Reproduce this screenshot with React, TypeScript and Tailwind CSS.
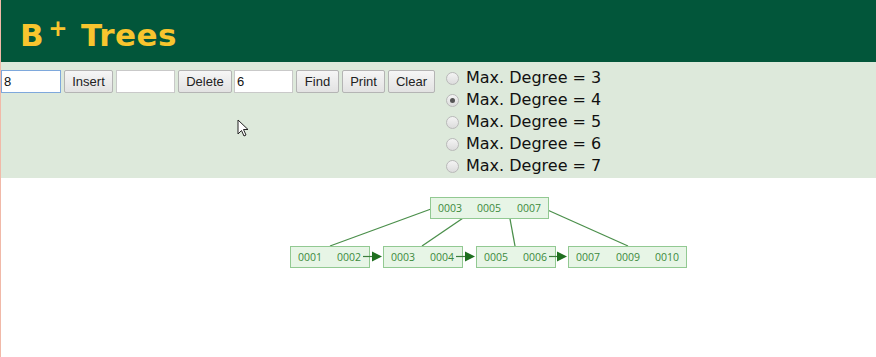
import { useState } from 'react'

const DEGREES = [3, 4, 5, 6, 7]

function Radio({ checked }: { checked: boolean }) {
  return (
    <span className="w-[13px] h-[13px] rounded-full border border-[#b9b9b9] bg-gradient-to-b from-[#f4f4f4] to-[#dcdcdc] flex items-center justify-center">
      {checked && <span className="w-[5px] h-[5px] rounded-full bg-[#555]" />}
    </span>
  )
}

function Btn({ label, w }: { label: string; w: string }) {
  return (
    <button
      className={`${w} h-[23px] shrink-0 rounded-[2px] border border-[#b4b4b4] bg-gradient-to-b from-[#f6f6f6] to-[#e2e2e2] text-[13px] text-[#222] font-['Liberation_Sans',Arial,sans-serif]`}
    >
      {label}
    </button>
  )
}

function Field({ value, w, focused }: { value: string; w: string; focused?: boolean }) {
  return (
    <input
      readOnly
      value={value}
      className={`${w} h-[23px] shrink-0 px-[2px] bg-white text-[13px] text-[#111] font-['Liberation_Sans',Arial,sans-serif] outline-none border ${
        focused ? 'border-[#7ea8dc]' : 'border-[#c9c9c9]'
      }`}
    />
  )
}

type Node = { x: number; w: number; y: number; keys: [string, number][] }

const NODES: Node[] = [
  { x: 430, w: 118, y: 197, keys: [['0003', 438], ['0005', 477], ['0007', 517]] },
  { x: 290, w: 79, y: 246, keys: [['0001', 298], ['0002', 337]] },
  { x: 383, w: 79, y: 246, keys: [['0003', 391], ['0004', 430]] },
  { x: 476, w: 79, y: 246, keys: [['0005', 484], ['0006', 523]] },
  { x: 568, w: 118, y: 246, keys: [['0007', 576], ['0009', 616], ['0010', 655]] },
]

const EDGES = [
  [431, 209, 330, 246],
  [469, 214, 422, 246],
  [508, 208, 515, 246],
  [543, 208, 628, 246],
]

const LINKS = [
  [363, 382],
  [456, 475],
  [549, 567],
]

function Tree() {
  const oy = 178
  return (
    <svg width="875" height="179" viewBox={`1 ${oy} 875 179`} className="block">
      {EDGES.map(([x1, y1, x2, y2], i) => (
        <line key={i} x1={x1} y1={y1} x2={x2} y2={y2} stroke="#4b8f4b" strokeWidth="1.3" />
      ))}
      {NODES.map((n, i) => (
        <g key={i}>
          <rect x={n.x + 0.5} y={n.y + 0.5} width={n.w} height={21} fill="#e7f5e6" stroke="#92c992" />
          {n.keys.map(([k, kx]) => (
            <text
              key={k + kx}
              x={kx}
              y={n.y + 15}
              fontSize="10.5"
              fill="#3d8a3d"
              fontFamily="'Open Sans', 'Noto Sans', sans-serif"
            >
              {k}
            </text>
          ))}
        </g>
      ))}
      {LINKS.map(([a, b], i) => (
        <g key={i}>
          <line x1={a} y1={256.5} x2={b - 8} y2={256.5} stroke="#3c7f3c" strokeWidth="1.2" />
          <polygon points={`${b - 10},251.5 ${b},256.5 ${b - 10},261.5`} fill="#1f6f1f" />
        </g>
      ))}
    </svg>
  )
}

export default function App() {
  const [degree] = useState(4)
  return (
    <div className="w-[876px] h-[357px] bg-white overflow-hidden border-l border-[#f1b9a8] relative">
      <header className="h-[62px] bg-[#02563a] pl-[19px] pt-[8px] flex items-center">
        <h1 className="text-[31px] leading-none font-bold text-[#f8c52e] font-['DejaVu_Sans',Verdana,sans-serif] tracking-[0.5px] flex items-baseline">
          <span>B</span>
          <span className="inline-block text-[23px] relative -top-[10px] ml-[4px] mr-[13px]">+</span>
          <span>Trees</span>
        </h1>
      </header>
      <section className="h-[116px] bg-[#dde9db] flex">
        <div className="flex items-start pt-[8px] h-fit">
          <Field value="8" w="w-[60px]" focused />
          <Btn label="Insert" w="w-[49px] ml-[3px]" />
          <Field value="" w="w-[59px] ml-[3px]" />
          <Btn label="Delete" w="w-[54px] ml-[3px]" />
          <Field value="6" w="w-[59px] ml-[2px]" />
          <Btn label="Find" w="w-[43px] ml-[3px]" />
          <Btn label="Print" w="w-[43px] ml-[3px]" />
          <Btn label="Clear" w="w-[47px] ml-[3px]" />
        </div>
        <ul className="ml-[11px] pt-[5px] flex flex-col font-['DejaVu_Sans',Verdana,sans-serif] text-[16px] text-[#111]">
          {DEGREES.map(d => (
            <li key={d} className="h-[22px] flex items-center gap-[7px]">
              <Radio checked={d === degree} />
              <span>Max. Degree = {d}</span>
            </li>
          ))}
        </ul>
        <svg className="absolute left-[236px] top-[119px]" width="13" height="19" viewBox="0 0 13 19">
          <path d="M1 1 L1 15 L4.5 11.5 L7 17 L9 16 L6.5 10.5 L11 10.5 Z" fill="#fff" stroke="#222" strokeWidth="1" />
        </svg>
      </section>
      <Tree />
    </div>
  )
}
